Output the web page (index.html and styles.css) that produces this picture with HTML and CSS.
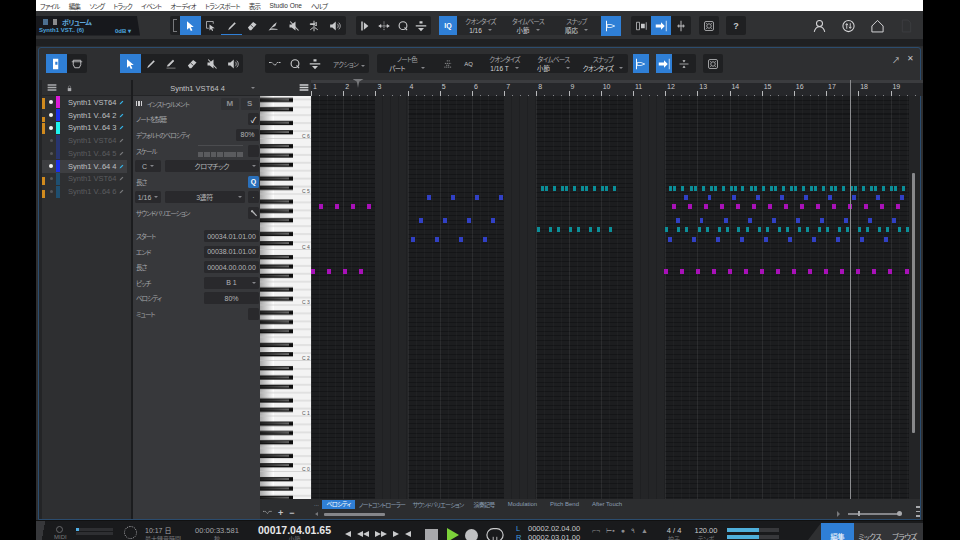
FILE: index.html
```html
<!DOCTYPE html>
<html lang="ja">
<head>
	<meta charset="UTF-8">
	<title>Studio One</title>
	<link rel="stylesheet" href="styles.css">
</head>
<body>
	<svg class="sprites" width="0" height="0">
		<symbol id="i-arrow" viewBox="0 0 16 16"><path d="M4 1.5V13l3-2.800 2.200 4.300 2-1-2.100-4.200H13z" fill="currentColor"/></symbol>
		<symbol id="i-select" viewBox="0 0 16 16"><path d="M2 2h9v3M2 2v9h3" fill="none" stroke="currentColor"/><path d="M6 6v8l2-2 1.500 2.800 1.300-.7L9.500 11H13z" fill="currentColor"/></symbol>
		<symbol id="i-pen" viewBox="0 0 16 16"><path d="M3 13.500l1-3L11.500 3l1.500 1.500L5.500 12z" fill="currentColor"/></symbol>
		<symbol id="i-line" viewBox="0 0 16 16"><path d="M3 11l1-2 6.500-6.500 1.500 1.500L5.500 10.500zM2 13.500h12" fill="currentColor" stroke="currentColor" stroke-width=".7"/></symbol>
		<symbol id="i-eraser" viewBox="0 0 16 16"><path d="M2.500 10l7-7.500 4.500 3.500-7 7.500H5z" fill="currentColor"/><path d="M6 6.500l4 3.500" stroke="#1f2022"/></symbol>
		<symbol id="i-knife" viewBox="0 0 16 16"><path d="M2 14l7-8 4-3-2 5-6 3 9 1v1H6z" fill="currentColor"/></symbol>
		<symbol id="i-mute" viewBox="0 0 16 16"><path d="M2 6h3l5-4v12l-5-4H2z" fill="currentColor"/><path d="M3 2l11 12" stroke="currentColor" stroke-width="1.400"/></symbol>
		<symbol id="i-bend" viewBox="0 0 16 16"><path d="M8 1v14M3 5h6l2-2v5l-2-2H3zM7 10l-4 3M9 10l4 3" fill="none" stroke="currentColor" stroke-width="1.300"/></symbol>
		<symbol id="i-speaker" viewBox="0 0 16 16"><path d="M1.500 6h3l4.500-4v12l-4.500-4h-3z" fill="currentColor"/><path d="M11 5a4 4 0 0 1 0 6M13 3.500a6 6 0 0 1 0 9" fill="none" stroke="currentColor"/></symbol>
		<symbol id="i-strip" viewBox="0 0 16 16"><path d="M3 2h2v12H3zM6.500 3l6 5-6 5z" fill="currentColor"/></symbol>
		<symbol id="i-stretch" viewBox="0 0 16 16"><path d="M8 2v12" stroke="currentColor" stroke-dasharray="1.500 1"/><path d="M1 8h14M1 8l3-2v4zM15 8l-3-2v4z" fill="currentColor" stroke="currentColor" stroke-width=".8"/></symbol>
		<symbol id="i-q" viewBox="0 0 16 16"><circle cx="8" cy="7.500" r="5.200" fill="none" stroke="currentColor" stroke-width="1.500"/><path d="M10 10l3.500 3.500" stroke="currentColor" stroke-width="1.500"/></symbol>
		<symbol id="i-bar" viewBox="0 0 16 16"><path d="M6 1.500h4v3H6zM1 7h14v1.500H1zM4 10.500h8L8 15z" fill="currentColor"/></symbol>
		<symbol id="i-snap" viewBox="0 0 16 16"><path d="M2 1v14" stroke="currentColor" stroke-width="1.300"/><path d="M3 6h5l5 2-5 2H3z" fill="none" stroke="currentColor"/></symbol>
		<symbol id="i-goto" viewBox="0 0 16 16"><path d="M1 6h7V3l5 5-5 5v-3H1z" fill="currentColor"/><path d="M15 1v14" stroke="currentColor"/></symbol>
		<symbol id="i-box" viewBox="0 0 16 16"><path d="M2 3h4v10H2zM15 3v10" fill="none" stroke="currentColor"/><path d="M8 5h5v6H8z" fill="currentColor"/></symbol>
		<symbol id="i-cross" viewBox="0 0 16 16"><path d="M8 1v14M3 8h10M5 6v4M11 6v4" fill="none" stroke="currentColor" stroke-width="1.200"/></symbol>
		<symbol id="i-split" viewBox="0 0 16 16"><path d="M2 8h12" stroke="currentColor"/><path d="M6 3h4L8 6zM6 13h4l-2-3z" fill="currentColor"/></symbol>
		<symbol id="i-dots" viewBox="0 0 16 16"><rect x="2" y="2" width="12" height="12" rx="2" fill="none" stroke="currentColor"/><circle cx="8" cy="8" r="3" fill="none" stroke="currentColor"/><path d="M4 4h1v1H4zM11 4h1v1h-1zM4 11h1v1H4zM11 11h1v1h-1z" fill="currentColor"/></symbol>
		<symbol id="i-wave" viewBox="0 0 16 16"><path d="M0 6h4l4 4 3-4h5" fill="none" stroke="currentColor" stroke-width="1.300" stroke-dasharray="2.500 .8"/></symbol>
		<symbol id="i-note" viewBox="0 0 16 16"><path d="M3 3h10v6l-2 4H5L3 9z" fill="none" stroke="currentColor" stroke-width="1.200"/><path d="M1 5h14" stroke="currentColor"/></symbol>
		<symbol id="i-piano" viewBox="0 0 16 16"><path d="M4 1h7v14H4z" fill="currentColor"/><path d="M7 5h3v4H7z" fill="#2f7fd6"/></symbol>
		<symbol id="i-lines" viewBox="0 0 16 16"><path d="M1 2h14v2.500H1zM1 6h14v2.500H1zM1 10h14v2.500H1z" fill="currentColor"/></symbol>
		<symbol id="i-steps" viewBox="0 0 16 16"><path d="M6 3h6M3 7h10M5 10h6M2 13h12" stroke="currentColor" stroke-dasharray="2 1"/></symbol>
		<symbol id="i-lock" viewBox="0 0 16 16"><path d="M4 7h8v7H4z" fill="currentColor"/><path d="M5.500 7V4.500a2.500 2.500 0 0 1 5 0V7" fill="none" stroke="currentColor"/></symbol>
		<symbol id="i-edit" viewBox="0 0 16 16"><path d="M2 14l1-4 8-8 3 3-8 8z" fill="currentColor"/></symbol>
		<symbol id="i-wrench" viewBox="0 0 16 16"><path d="M2 3l3-1 2 3 7 8-1.500 1.500L5 7 2 6z" fill="currentColor"/></symbol>
	</svg>

	<div class="app">
		<div class="menu">
			<span>ファイル</span><span>編集</span><span>ソング</span><span>トラック</span><span>イベント</span><span>オーディオ</span><span>トランスポート</span><span>表示</span><span class="en">Studio One</span><span>ヘルプ</span>
		</div>

		<div class="main-bar">
			<div class="vol-panel">
				<div class="vol-title"><span class="vol-ico"></span><span>ボリューム</span></div>
				<div class="vol-sub"><span>Synth1 VST.. (6)</span><span>0dB ▾</span></div>
			</div>
			<div class="group g-tools">
				<span class="bracket"></span>
				<span class="btn on"><svg><use href="#i-arrow"/></svg></span>
				<span class="btn"><svg><use href="#i-select"/></svg></span>
				<span class="btn current"><svg><use href="#i-pen"/></svg></span>
				<span class="btn"><svg><use href="#i-eraser"/></svg></span>
				<span class="btn"><svg><use href="#i-knife"/></svg></span>
				<span class="btn"><svg><use href="#i-mute"/></svg></span>
				<span class="btn"><svg><use href="#i-bend"/></svg></span>
				<span class="btn"><svg><use href="#i-speaker"/></svg></span>
			</div>
			<div class="group g-edit">
				<span class="btn"><svg><use href="#i-strip"/></svg></span>
				<span class="btn"><svg><use href="#i-stretch"/></svg></span>
				<span class="btn"><svg><use href="#i-q"/></svg></span>
				<span class="btn"><svg><use href="#i-bar"/></svg></span>
			</div>
			<span class="btn on iq">IQ</span>
			<div class="sel-band">
				<div class="sel w-47"><span>クオンタイズ</span><b>1/16<i class="caret"></i></b></div>
				<div class="sel w-48"><span>タイムベース</span><b>小節<i class="caret"></i></b></div>
				<div class="sel w-49"><span>スナップ</span><b>順応<i class="caret"></i></b></div>
			</div>
			<span class="btn on"><svg><use href="#i-snap"/></svg></span>
			<div class="group g-after-snap">
				<span class="btn"><svg><use href="#i-box"/></svg></span>
				<span class="btn on"><svg><use href="#i-goto"/></svg></span>
				<span class="btn"><svg><use href="#i-cross"/></svg></span>
			</div>
			<span class="btn solo g-dots"><svg><use href="#i-dots"/></svg></span>
			<span class="btn solo g-help">?</span>
			<div class="user-icons">
				<svg viewBox="0 0 20 20"><circle cx="10" cy="6.500" r="4.300" fill="none" stroke="currentColor" stroke-width="1.500"/><path d="M2.500 18.500c1-5 3.500-7.500 7.500-7.500s6.500 2.500 7.500 7.500" fill="none" stroke="currentColor" stroke-width="1.500"/></svg>
				<svg viewBox="0 0 20 20"><circle cx="10" cy="10" r="8" fill="none" stroke="currentColor" stroke-width="1.500"/><path d="M7.500 14V7M5.800 8.800l1.700-2.300 1.700 2.300M12.500 6v7M10.800 11.200l1.700 2.300 1.700-2.300" fill="none" stroke="currentColor" stroke-width="1.300"/></svg>
				<svg viewBox="0 0 20 20"><path d="M2 18.500V10l8-8 8 8v8.500z" fill="none" stroke="currentColor" stroke-width="1.400" stroke-linejoin="round"/></svg>
				<svg class="dim" viewBox="0 0 20 20"><path d="M4 1.500h8l4 4v13H4z" fill="none" stroke="currentColor" stroke-width="1.300"/></svg>
			</div>
		</div>

		<div class="under-bar"></div>

		<div class="editor">
			<div class="ed-bar">
				<div class="group g-view">
					<span class="btn on"><svg><use href="#i-piano"/></svg></span>
					<span class="btn"><svg><use href="#i-note"/></svg></span>
				</div>
				<div class="group g-ed-tools">
					<span class="btn on"><svg><use href="#i-arrow"/></svg></span>
					<span class="btn"><svg><use href="#i-pen"/></svg></span>
					<span class="btn"><svg><use href="#i-line"/></svg></span>
					<span class="btn"><svg><use href="#i-eraser"/></svg></span>
					<span class="btn"><svg><use href="#i-mute"/></svg></span>
					<span class="btn"><svg><use href="#i-speaker"/></svg></span>
				</div>
				<div class="group g-action">
					<span class="btn"><svg><use href="#i-wave"/></svg></span>
					<span class="btn"><svg><use href="#i-q"/></svg></span>
					<span class="btn"><svg><use href="#i-bar"/></svg></span>
					<span class="action">アクション<i class="caret"></i></span>
				</div>
				<div class="group g-note">
					<div class="sel w-60"><span>ノート色</span><b class="tight">パート<i class="caret wide"></i></b></div>
					<span class="btn thin"><svg><use href="#i-steps"/></svg></span>
					<span class="btn thin aq">AQ</span>
					<div class="sel w-51"><span>クオンタイズ</span><b>1/16 T<i class="caret"></i></b></div>
					<div class="sel w-47"><span>タイムベース</span><b>小節<i class="caret wide"></i></b></div>
					<div class="sel w-52"><span>スナップ</span><b class="tight">クオンタイズ<i class="caret"></i></b></div>
				</div>
				<span class="btn on nar"><svg><use href="#i-snap"/></svg></span>
				<div class="group g-ed-goto">
					<span class="btn on nar"><svg><use href="#i-goto"/></svg></span>
					<span class="btn wide"><svg><use href="#i-split"/></svg></span>
				</div>
				<span class="btn solo g-ed-dots"><svg><use href="#i-dots"/></svg></span>
				<div class="win-btns"><span>↗</span><span>✕</span></div>
			</div>

			<div class="ed-body">
				<div class="tracks">
					<div class="tracks-head">
						<svg><use href="#i-lines"/></svg>
						<svg class="lock"><use href="#i-lock"/></svg>
					</div>
					<div class="track">
						<i class="flag full"></i><i class="dot"></i><i class="color c-mag"></i><span>Synth1 VST64</span><svg class="pen"><use href="#i-edit"/></svg>
					</div>
					<div class="track">
						<i class="flag low"></i><i class="dot"></i><i class="color c-blue"></i><span>Synth1 V..64 2</span><svg class="pen"><use href="#i-edit"/></svg>
					</div>
					<div class="track">
						<i class="flag full"></i><i class="dot"></i><i class="color c-cyan"></i><span>Synth1 V..64 3</span><svg class="pen"><use href="#i-edit"/></svg>
					</div>
					<div class="track off">
						<i class="flag none"></i><i class="dot"></i><i class="color c-dimblue"></i><span>Synth1 VST64</span><svg class="pen"><use href="#i-edit"/></svg>
					</div>
					<div class="track off">
						<i class="flag none"></i><i class="dot"></i><i class="color c-dimblue"></i><span>Synth1 V..64 5</span><svg class="pen"><use href="#i-edit"/></svg>
					</div>
					<div class="track selected">
						<i class="flag none"></i><i class="dot"></i><i class="color c-blue"></i><span>Synth1 V..64 4</span><svg class="pen"><use href="#i-edit"/></svg>
					</div>
					<div class="track off">
						<i class="flag mid"></i><i class="dot"></i><i class="color c-dimteal"></i><span>Synth1 VST64</span><svg class="pen"><use href="#i-edit"/></svg>
					</div>
					<div class="track off">
						<i class="flag mid"></i><i class="dot"></i><i class="color c-dimteal"></i><span>Synth1 V..64 6</span><svg class="pen"><use href="#i-edit"/></svg>
					</div>
				</div>

				<div class="inspector">
					<div class="insp-head"><span>Synth1 VST64 4</span><i class="caret"></i></div>
					<div class="row"><label><span class="kbd-ico"></span>インストゥルメント</label><span class="field ms">M</span><span class="field ms">S</span></div>
					<div class="row"><label>ノートを試聴</label><span class="field sq check">✓</span></div>
					<div class="row"><label>デフォルトのベロシティ</label><span class="field pct">80%</span></div>
					<div class="row"><label>スケール</label><span class="mini-keys"></span><span class="field sq"></span></div>
					<div class="row"><span class="field short">C<i class="caret"></i></span><span class="field grow">クロマチック<i class="caret end"></i></span></div>
					<div class="row"><label>長さ</label><span class="field sq blue">Q</span></div>
					<div class="row"><span class="field short">1/16<i class="caret"></i></span><span class="field grow">3連符<i class="caret end"></i></span><span class="field sq">·</span></div>
					<div class="row"><label>サウンドバリエーション</label><span class="field sq"><svg><use href="#i-wrench"/></svg></span></div>
					<div class="row first-value"><label>スタート</label><span class="field val">00034.01.01.00</span></div>
					<div class="row"><label>エンド</label><span class="field val">00038.01.01.00</span></div>
					<div class="row"><label>長さ</label><span class="field val">00004.00.00.00</span></div>
					<div class="row"><label>ピッチ</label><span class="field val">B 1<i class="caret end"></i></span></div>
					<div class="row"><label>ベロシティ</label><span class="field val">80%</span></div>
					<div class="row"><label>ミュート</label><span class="field sq"></span></div>
				</div>

				<div class="roll">
					<div class="roll-head">
						<div class="corner"><svg><use href="#i-lines"/></svg></div>
						<div class="ruler">
							<span>1</span><span>2</span><span>3</span><span>4</span><span>5</span><span>6</span><span>7</span><span>8</span><span>9</span><span>10</span><span>11</span><span>12</span><span>13</span><span>14</span><span>15</span><span>16</span><span>17</span><span>18</span><span>19</span>
							<i class="locator"></i>
						</div>
					</div>
					<div class="roll-main">
						<svg class="piano" width="51" height="403">
							<defs>
								<linearGradient id="shade"><stop offset="0" stop-color="#a8a8a8"/><stop offset="1" stop-color="#fff"/></linearGradient>
								<linearGradient id="shine"><stop offset="0" stop-color="#1c1c1c"/><stop offset="1" stop-color="#707070"/></linearGradient>
								<g id="black-key"><rect width="33" height="4.200" fill="#0d0d0d"/><rect y="1" width="29" height="1.800" fill="url(#shine)"/></g>
								<pattern id="octave" width="51" height="55.500" y="-12.500" patternUnits="userSpaceOnUse">
									<rect width="51" height="55.500" fill="#f3f3f3"/>
									<rect width="14" height="55.500" fill="url(#shade)"/>
									<path d="M0 7.900h51M0 15.900h51M0 23.800h51M0 31.700h51M0 39.600h51M0 47.600h51M0 55.200h51" stroke="#c4c4c4" stroke-width=".8"/>
									<use href="#black-key" y="5.100"/>
									<use href="#black-key" y="14.400"/>
									<use href="#black-key" y="23.700"/>
									<use href="#black-key" y="37.400"/>
									<use href="#black-key" y="46.700"/>
								</pattern>
							</defs>
							<rect width="51" height="403" fill="url(#octave)"/>
							<text x="42" y="42">C 6</text>
							<text x="42" y="97">C 5</text>
							<text x="42" y="153">C 4</text>
							<text x="42" y="208">C 3</text>
							<text x="42" y="264">C 2</text>
							<text x="42" y="319">C 1</text>
							<text x="42" y="375">C 0</text>
						</svg>
						<div class="grid" id="grid">
							<i class="empty bar-3"></i>
							<i class="empty bar-7"></i>
							<i class="empty bar-11"></i>
						</div>
						<div class="vscroll"><i></i></div>
					</div>
					<div class="roll-foot">
						<div class="foot-tools"><svg><use href="#i-wave"/></svg><span>+</span><span>−</span></div>
						<div class="foot-main">
							<div class="tabs">
								<span>...</span><span class="active">ベロシティ</span><span class="jp">ノートコントローラー</span><span class="jp">サウンドバリエーション</span><span class="jp">演奏記号</span><span>Modulation</span><span>Pitch Bend</span><span>After Touch</span>
							</div>
							<div class="hscroll">
								<i class="tri-left"></i><i class="thumb"></i><i class="tri-right"></i>
								<div class="zoom"><i class="knob"></i><i class="end"></i></div>
							</div>
						</div>
						<div class="foot-side"><i></i><i></i><i></i></div>
					</div>
					<i class="playhead"></i>
				</div>
			</div>
		</div>

		<div class="transport">
			<div class="tp midi"><span class="ring"></span><small>MIDI</small></div>
			<div class="tp meter"><i></i><i></i></div>
			<div class="tp spin"></div>
			<div class="tp clock"><span>10:17 日</span><small>最大録音時間</small></div>
			<div class="tp elapsed"><span>00:00:33.581</span><small>秒</small></div>
			<div class="tp pos"><b>00017.04.01.65</b><small>小節</small></div>
			<div class="tp keys">
				<i class="tl apart"></i><i class="tl"></i><i class="tl apart"></i><i class="tr"></i><i class="tr apart"></i><i class="tr apart"></i><i class="bar"></i><i class="tl"></i>
			</div>
			<div class="tp stop"></div>
			<div class="tp play"></div>
			<div class="tp rec"></div>
			<div class="tp loop"><svg viewBox="0 0 20 20"><rect x="1" y="3" width="18" height="14" rx="7" fill="none" stroke="currentColor" stroke-width="1.300"/><path d="M8 12v8M12 12v8" stroke="currentColor"/></svg></div>
			<div class="tp lr"><span><em>L</em>00002.02.04.00</span><span><em>R</em>00002.03.01.00</span></div>
			<div class="tp flags"><span>⌐¬</span><span>⊢▪</span><span>●</span><span>٩</span><span>▲</span></div>
			<div class="tp sig"><span>4 / 4</span><small>拍子</small></div>
			<div class="tp tempo"><span>120.00</span><small>テンポ</small></div>
			<div class="tp levels"><i></i><i></i></div>
			<div class="tabs-main"><span class="active">編集</span><span>ミックス</span><span>ブラウズ</span></div>
		</div>
	</div>
	<script src="notes.js"></script>
</body>
</html>
```

FILE: styles.css
```css
*{
	margin: 0;
	padding: 0;
	box-sizing: border-box;
}
html,body{
	height: 100%;
	overflow: hidden;
	background: #000;
}
body{
	font-family: "Liberation Sans", "Noto Sans CJK JP", sans-serif;
	font-size: 7px;
	color: #a4a5a8;
	font-feature-settings: "palt";
}
i{
	display: block;
	font-style: normal;
}
.sprites{
	position: absolute;
}
.app{
	width: 887px;
	height: 540px;
	margin-left: 36px;
	display: flex;
	flex-direction: column;
	background: #2e2f31;
	overflow: hidden;
}

/* menu */
.menu{
	height: 11px;
	flex: none;
	display: flex;
	align-items: center;
	gap: 9px;
	padding-left: 4px;
	background: #fff;
	color: #333;
	font-size: 6.5px;
	letter-spacing: -.7px;
}
.menu .en{
	letter-spacing: 0;
}

/* shared toolbar pieces */
.btn{
	width: 20px;
	height: 20px;
	flex: none;
	display: flex;
	align-items: center;
	justify-content: center;
	color: #c9cacc;
	font-weight: bold;
}
.btn svg{
	width: 12px;
	height: 12px;
}
.btn.on{
	background: #2f7fd6;
	color: #fff;
}
.btn.nar{
	width: 16px;
	height: 19px;
}
.btn.wide{
	width: 24px;
	height: 19px;
}
.btn.thin{
	width: 21px;
}
.btn.thin svg{
	width: 10px;
	height: 10px;
}
.aq{
	font-size: 6px;
	font-weight: normal;
}
.iq{
	width: 18px;
	font-size: 7px;
}
.group, .btn.solo{
	display: flex;
	align-items: center;
	background: #1f2022;
	border-radius: 2px;
}
.sel{
	flex: none;
	display: flex;
	flex-direction: column;
	align-items: center;
	font-size: 6.5px;
	line-height: 9px;
}
.sel span{
	letter-spacing: -.7px;
}
.sel b{
	display: flex;
	align-items: center;
	font-weight: normal;
	color: #d2d3d5;
}
.sel b.tight{
	letter-spacing: -.7px;
}
.caret{
	display: inline-block;
	width: 0;
	height: 0;
	margin-left: 6px;
	border-left: 2px solid transparent;
	border-right: 2px solid transparent;
	border-top: 2px solid #85868a;
}
.caret.wide{
	margin-left: 16px;
}
.w-47{ width: 47px; }
.w-48{ width: 48px; }
.w-49{ width: 49px; }
.w-51{ width: 51px; }
.w-52{ width: 52px; }
.w-60{ width: 60px; }

/* main toolbar */
.main-bar{
	height: 28px;
	flex: none;
	display: flex;
	align-items: center;
	background: #303133;
	padding-top: 1px;
}
.vol-panel{
	width: 104px;
	height: 20px;
	flex: none;
	padding: 2px 0 0 3px;
	background: #17181c;
	clip-path: polygon(0 0, 97% 0, 100% 100%, 0 100%);
}
.vol-title{
	display: flex;
	align-items: center;
	gap: 5px;
	height: 8px;
	color: #5fa8dd;
	font-weight: bold;
	padding-left: 4px;
	letter-spacing: -.5px;
}
.vol-ico{
	width: 14px;
	height: 6px;
	border-left: 5px solid #4c6f8f;
	border-right: 4px solid #8a8b8d;
}
.vol-sub{
	display: flex;
	justify-content: space-between;
	padding-right: 9px;
	margin-top: 1px;
	font-size: 6px;
	font-weight: bold;
	color: #4ea4dc;
}
.g-tools{
	margin-left: 30px;
	width: 176px;
	height: 19px;
}
.bracket{
	width: 4px;
	height: 13px;
	margin-left: 3px;
	margin-right: 3px;
	flex: none;
	border: 1px solid #77787b;
	border-right: 0;
}
.g-tools .btn{
	width: 20.7px;
	height: 19px;
}
.current{
	box-shadow: inset 0 -1px 0 #2f7fd6;
}
.g-edit{
	margin-left: 10px;
	width: 75px;
	height: 19px;
}
.g-edit .btn{
	width: 18.7px;
	height: 19px;
}
.iq{
	margin-left: 8px;
	height: 19px;
}
.sel-band{
	display: flex;
	align-items: center;
	height: 19px;
	background: #27282a;
}
.g-after-snap{
	margin-left: 10px;
}
.g-after-snap .btn{
	height: 19px;
}
.g-dots{
	margin-left: 8px;
	height: 19px;
}
.g-help{
	margin-left: 7px;
	height: 19px;
	font-size: 9px;
}
.user-icons{
	margin-left: auto;
	display: flex;
	color: #d6d6d8;
	padding-right: 2px;
}
.user-icons svg{
	width: 29px;
	height: 14px;
}
.user-icons .dim{
	color: #3d3e41;
}
.under-bar{
	height: 8px;
	flex: none;
	background: #1f2022;
	border-bottom: 1px solid #2a2b2d;
}

/* editor window */
.editor{
	flex: 1;
	min-height: 0;
	margin: 0 2px;
	display: flex;
	flex-direction: column;
	border: 1px solid #2b4c6e;
	border-radius: 3px 3px 0 0;
	background: #2e2f31;
}
.ed-bar{
	height: 32px;
	flex: none;
	display: flex;
	align-items: center;
	padding-left: 7px;
	padding-bottom: 1px;
}
.ed-bar .group{
	height: 19px;
}
.g-view{
	width: 41px;
}
.g-view .btn{
	width: 20.5px;
	height: 19px;
}
.g-ed-tools{
	margin-left: 33px;
	width: 123px;
}
.g-ed-tools .btn{
	width: 20.5px;
	height: 19px;
}
.g-action{
	margin-left: 22px;
	width: 104px;
}
.action{
	margin-left: 8px;
	white-space: nowrap;
	font-size: 6.5px;
	letter-spacing: -.6px;
}
.action .caret{
	margin-left: 3px;
}
.g-action .btn{
	height: 19px;
}
.g-note{
	margin-left: 8px;
	width: 251px;
}
.g-note .btn{
	height: 19px;
}
.ed-bar > .btn.on{
	margin-left: 5px;
}
.g-ed-goto{
	margin-left: 7px;
	width: 40px;
}
.g-ed-dots{
	margin-left: 7px;
	height: 19px;
}
.win-btns{
	margin-left: auto;
	display: flex;
	gap: 7px;
	align-self: flex-start;
	padding: 6px 6px 0 0;
	font-size: 8px;
	color: #c4c5c7;
}

.ed-body{
	flex: 1;
	min-height: 0;
	display: flex;
}

/* track list */
.tracks{
	width: 93px;
	flex: none;
	padding-left: 3px;
	background: #2e2f31;
	border-right: 1px solid #1b1c1e;
	box-shadow: inset 3px 0 0 #232426;
}
.tracks-head{
	height: 16px;
	display: flex;
	align-items: center;
	padding-left: 5px;
	gap: 9px;
	background: #2e2f31;
	color: #a9aaad;
	box-shadow: inset 0 -1px 0 #232426;
}
.tracks-head svg{
	width: 10px;
	height: 10px;
}
.tracks-head .lock{
	width: 7px;
	height: 7px;
}
.track{
	height: 12.75px;
	display: flex;
	align-items: center;
	width: 85px;
	color: #bfc0c2;
	font-size: 7.5px;
}
.track span{
	width: 51px;
	flex: none;
	white-space: nowrap;
}
.track .pen{
	width: 5px;
	height: 5px;
	flex: none;
	margin-left: 0;
	color: #35b4e8;
}
.track.off{
	color: #5c5d60;
}
.track.off .pen{
	color: #77787a;
}
.track.off .dot{
	background: #55565a;
	width: 3px;
	height: 3px;
	margin: 0 3.5px 0 3.5px;
}
.track.selected{
	background: #3d3e41;
}
.flag{
	width: 3px;
	flex: none;
	background: #d08a1e;
	margin-right: 1px;
	align-self: flex-end;
}
.flag.full{ height: 11px; }
.flag.mid{ height: 8px; }
.flag.low{ height: 5px; }
.flag.none{ background: transparent; }
.dot{
	width: 4px;
	height: 4px;
	flex: none;
	margin: 0 3px;
	border-radius: 50%;
	background: #f2f2f2;
}
.color{
	width: 4px;
	height: 12px;
	flex: none;
	margin-right: 8px;
}
.c-mag{ background: #dc1ad8; }
.c-blue{ background: #1b30ea; }
.c-cyan{ background: #1ff2ee; }
.c-dimblue{ background: #28356f; }
.c-dimteal{ background: #1f4f70; }

/* inspector */
.inspector{
	width: 128px;
	flex: none;
	background: #37383b;
	border-left: 1px solid #1b1c1e;
	padding-right: 1px;
}
.insp-head{
	height: 16px;
	margin-right: -1px;
	display: flex;
	align-items: center;
	justify-content: center;
	font-size: 7.5px;
	color: #c4c5c7;
	background: #2e2f31;
	padding-left: 2px;
	position: relative;
	box-shadow: inset 0 -1px 0 #232426;
}
.insp-head .caret{
	position: absolute;
	right: 5px;
	top: 7px;
}
.row{
	height: 15.6px;
	display: flex;
	align-items: center;
	justify-content: flex-end;
	gap: 1.5px;
	padding-left: 2px;
}
.row label{
	margin-right: auto;
	padding-left: 1px;
	display: flex;
	align-items: center;
	gap: 4px;
	white-space: nowrap;
	font-size: 6.5px;
	letter-spacing: -.9px;
}
.first-value{
	margin-top: 7.5px;
}
.kbd-ico{
	width: 7px;
	height: 5px;
	background: repeating-linear-gradient(90deg, #d0d0d2 0 1px, #37383b 1px 1.7px);
}
.field{
	height: 12px;
	display: flex;
	align-items: center;
	justify-content: center;
	background: #29292c;
	border-radius: 1.5px;
	color: #b5b6b8;
	position: relative;
}
.field.ms{
	width: 18.5px;
	background: #303134;
	font-size: 8px;
	font-weight: bold;
	color: #8e8f92;
}
.field.sq{
	width: 11px;
	margin-left: 2px;
}
.field.sq svg{
	width: 8px;
	height: 8px;
}
.field.check{
	color: #fff;
	font-size: 8px;
}
.field.blue{
	background: #2a70bb;
	color: #fff;
	font-weight: bold;
}
.field.pct{
	width: 23px;
}
.field.short{
	width: 26px;
	margin-right: 2px;
}
.field.short .caret{
	margin-left: 3px;
}
.field.grow{
	flex: 1;
	letter-spacing: -.5px;
}
.caret.end{
	position: absolute;
	right: 3px;
	top: 5px;
}
.field.val{
	width: 55px;
	font-size: 7px;
}
.mini-keys{
	width: 45px;
	height: 12px;
	margin-right: 2px;
	background:
		linear-gradient(#37383b 0 6px, transparent 6px),
		repeating-linear-gradient(90deg, #5a5b5e 0 5.5px, #37383b 5.5px 6.5px);
	border-top: 1px solid #4b4c4f;
}

/* piano roll */
.roll{
	flex: 1;
	min-width: 0;
	display: flex;
	flex-direction: column;
	position: relative;
}
.roll-head{
	height: 16px;
	flex: none;
	display: flex;
}
.corner{
	width: 51px;
	flex: none;
	display: flex;
	justify-content: flex-end;
	align-items: center;
	padding-right: 2px;
	background: #2e2f31;
	color: #d0d1d3;
}
.corner svg{
	width: 10px;
	height: 10px;
}
.ruler{
	flex: 1;
	display: flex;
	position: relative;
	color: #c8c9cb;
	font-size: 7px;
	line-height: 13px;
	background:
		repeating-linear-gradient(90deg, #b8b9bb 0 1px, transparent 1px 32.2px) 0 100% / 100% 5px no-repeat,
		repeating-linear-gradient(90deg, #85868a 0 1px, transparent 1px 8.05px) 0 100% / 100% 1.5px no-repeat,
		linear-gradient(#3b3c3f 0 3px, #26272a 3px);
}
.ruler span{
	flex: none;
	width: 32.2px;
	padding-left: 2px;
}
.locator{
	position: absolute;
	left: 41.5px;
	top: -1px;
	width: 11px;
	height: 9px;
	background: #77787b;
	clip-path: polygon(0 0, 100% 0, 60% 30%, 50% 100%, 40% 30%);
}
.roll-main{
	flex: 1;
	min-height: 0;
	display: flex;
}
.piano{
	flex: none;
	display: block;
}
.piano text{
	font-size: 5px;
	fill: #555;
}
.grid{
	width: 598px;
	flex: none;
	position: relative;
	overflow: hidden;
	background-color: #17181a;
	background-image:
		repeating-linear-gradient(90deg, rgba(255,255,255,.05) 0 1px, transparent 1px 32.2px),
		repeating-linear-gradient(90deg, rgba(255,255,255,.025) 0 1px, transparent 1px 8.05px),
		repeating-linear-gradient(180deg, #1c1d1f 0 3.6px, #141517 3.6px 4.625px);
}
.empty{
	position: absolute;
	top: 0;
	bottom: 0;
	width: 32.2px;
	background: repeating-linear-gradient(90deg, #242527 0 7px, #1f2022 7px 8.05px);
}
.bar-3{ left: 64.4px; }
.bar-7{ left: 193.2px; }
.bar-11{ left: 322px; }
.note{
	position: absolute;
	width: 3.3px;
	height: 5px;
}
.note.wide{
	width: 3px;
}
.vscroll{
	flex: 1;
	background: #232426;
	padding-left: 3px;
	padding-top: 77px;
}
.vscroll i{
	width: 3px;
	height: 260px;
	background: #87888b;
	border-radius: 1px;
}
.roll-foot{
	height: 20px;
	flex: none;
	display: flex;
	background: #2c2d2f;
}
.foot-tools{
	width: 51px;
	flex: none;
	display: flex;
	align-items: center;
	gap: 6px;
	padding: 7px 0 0 3px;
	font-size: 9px;
	font-weight: bold;
	color: #c4c5c7;
}
.foot-tools svg{
	width: 9px;
	height: 9px;
}
.foot-main{
	width: 598px;
	flex: none;
}
.tabs{
	height: 10px;
	display: grid;
	grid-template-columns: 11px 33px 54px 58px 34px 43px 41px 44px;
	align-items: center;
	justify-items: center;
	font-size: 6px;
	color: #8b9fb2;
}
.tabs span{
	white-space: nowrap;
}
.tabs .jp{
	letter-spacing: -.7px;
}
.tabs .active{
	width: 100%;
	height: 9px;
	line-height: 9px;
	text-align: center;
	background: #2f7fd6;
	color: #fff;
	letter-spacing: -.6px;
}
.hscroll{
	height: 10px;
	display: flex;
	align-items: center;
	padding-left: 4px;
}
.tri-left{
	width: 0;
	height: 0;
	border: 2.5px solid transparent;
	border-right: 3px solid #77787b;
	border-left: 0;
}
.thumb{
	width: 61px;
	height: 3px;
	margin-left: 6px;
	border-radius: 1px;
	background: #85868a;
}
.tri-right{
	width: 0;
	height: 0;
	margin-left: 452px;
	border: 3px solid transparent;
	border-left: 3px solid #77787b;
	border-right: 0;
}
.zoom{
	width: 52px;
	height: 1.5px;
	margin-left: 8px;
	position: relative;
	background: #85868a;
}
.knob{
	position: absolute;
	left: 10px;
	top: -2px;
	width: 2px;
	height: 5px;
	background: #a9aaad;
}
.zoom .end{
	position: absolute;
	right: -2px;
	top: -2px;
	width: 5px;
	height: 5px;
	border-radius: 50%;
	background: #a9aaad;
}
.foot-side{
	flex: 1;
	display: flex;
	flex-direction: column;
	align-items: center;
	gap: 3px;
	padding: 7px 0 0 6px;
}
.foot-side i{
	width: 4px;
	height: 1.5px;
	background: #a9aaad;
}
.playhead{
	position: absolute;
	left: 590px;
	top: 0;
	bottom: 20px;
	width: 1px;
	background: #8b8c8f;
}

/* transport */
.transport{
	height: 20px;
	flex: none;
	display: flex;
	align-items: flex-start;
	padding: 5px 0 0 0;
	background: linear-gradient(100deg, #36373a 0 9px, #191a1c 9px);
	position: relative;
	overflow: hidden;
	border-top: 1px solid #111;
}
.tp{
	flex: none;
	display: flex;
	flex-direction: column;
	font-size: 7px;
	color: #a4a5a8;
	line-height: 9px;
	white-space: nowrap;
}
.tp small{
	font-size: 6px;
	color: #77787b;
}
.midi{
	width: 22px;
	margin-left: 18px;
}
.ring{
	width: 7px;
	height: 7px;
	border: 1px solid #66676a;
	border-radius: 50%;
	margin-left: 2px;
}
.meter{
	width: 37px;
	margin-top: 2px;
	gap: 1px;
}
.meter i{
	height: 3px;
	background: #2e2f32;
}
.meter i:first-child{
	background: linear-gradient(90deg, #4fb0e8 0 3px, #2e2f32 3px);
}
.spin{
	width: 13px;
	height: 13px;
	margin-left: 11px;
	border: 1.5px dotted #a9aaad;
	border-radius: 50%;
}
.clock{
	width: 40px;
	margin-left: 8px;
}
.elapsed{
	width: 64px;
	align-items: center;
	font-size: 7.5px;
}
.pos{
	width: 77px;
	margin-left: 7px;
	align-items: center;
}
.pos b{
	font-size: 10.5px;
	color: #e8e8e9;
	line-height: 9px;
}
.keys{
	flex-direction: row;
	margin-left: 12px;
	padding-top: 5px;
	width: 65px;
}
.keys i{
	width: 0;
	height: 0;
	border: 3.5px solid transparent;
}
.keys .tl{
	border-right: 6px solid #c9cacc;
	border-left: 0;
}
.keys .tr{
	border-left: 6px solid #c9cacc;
	border-right: 0;
}
.keys .apart{
	margin-right: 6px;
}
.keys .bar{
	width: 1px;
	height: 7px;
	border: 0;
	background: #c9cacc;
}
.stop{
	width: 13px;
	height: 15px;
	margin: 3px 0 0 15px;
	background: #a8a9ac;
}
.play{
	width: 0;
	height: 0;
	margin-left: 9px;
	margin-top: 2px;
	border-left: 12px solid #7cd23a;
	border-top: 7px solid transparent;
	border-bottom: 7px solid transparent;
}
.rec{
	width: 13px;
	height: 13px;
	margin-left: 6px;
	margin-top: 3px;
	border-radius: 50%;
	background: #c0c1c3;
}
.loop{
	width: 18px;
	margin-left: 8px;
	color: #c9cacc;
}
.loop svg{
	width: 18px;
	height: 18px;
}
.lr{
	width: 70px;
	margin-left: 12px;
	line-height: 8.5px;
	margin-top: -1px;
	font-size: 7.5px;
	color: #c9cacc;
}
.lr em{
	display: inline-block;
	width: 12px;
	color: #3f9be0;
	font-style: normal;
}
.flags{
	flex-direction: row;
	gap: 6px;
	width: 71px;
	margin-left: 6px;
	color: #8c8d90;
}
.sig{
	width: 22px;
	align-items: center;
	font-size: 7.5px;
	color: #c9cacc;
}
.tempo{
	width: 28px;
	margin-left: 7px;
	align-items: center;
	font-size: 7.5px;
	color: #c9cacc;
}
.levels{
	width: 52px;
	margin-left: 7px;
	margin-top: 2px;
	gap: 3px;
}
.levels i{
	height: 4px;
	background: linear-gradient(90deg, #4fb0dc 0 62%, #37383b 62%);
}
.tabs-main{
	position: absolute;
	right: 0;
	top: 2px;
	bottom: 0;
	display: flex;
	font-size: 7.5px;
	line-height: 29px;
	color: #c4c5c7;
}
.tabs-main::before{
	content: "";
	width: 13px;
	background: #2e2f31;
	clip-path: polygon(100% 0, 100% 100%, 0 100%);
}
.tabs-main span{
	width: 32.5px;
	text-align: center;
	background: #333437;
	letter-spacing: -.6px;
}
.tabs-main span:last-child{
	width: 37px;
}
.tabs-main .active{
	background: #2f7fd6;
	color: #fff;
}
```

FILE: notes.js
```js
// x = centre of each note on the page, y = centre of its row
const pageLeft = 311;
const pageTop = 96;
const colors = { mag: '#a811b8', blue: '#3140c4', teal: '#0b8e98' };

const rows = [
	{ c: 'mag', y: 206.5, x: [321,337,353,369,674,690,706,722,738,754,770,786,802,818,834,850,866,882,898] },
	{ c: 'mag', y: 271, x: [313,329,345,361,666,682,698,714,730,746,762,778,794,810,826,842,858,874,890,907] },
	{ c: 'blue', y: 197, x: [429,453,477,501,686,709.5,734,758,782,806,830,854,878,902] },
	{ c: 'blue', y: 220, x: [421,445,469,493,678,701.5,726,750,774,798,822,846,870,894] },
	{ c: 'blue', y: 239, x: [413,437,461,485,670,694,718,742,766,790,814,838,862,886] },
	{ c: 'teal', y: 188, x: [543,547,555,563,567,575,583,587,595,603,607,615,671,675,683,692,696,704,712,716,724,732,736,743,752,756,764,772,776,784,792,796,804,812,816,824,832,836,844,852,856,864,872,876,884,892,896,904] },
	{ c: 'teal', y: 229.5, x: [539,551,559,571,579,591,599,611,667,679,687,700,708,720,728,739,748,760,768,780,788,800,808,820,828,840,848,860,868,880,888,900,908] }
];

const grid = document.getElementById('grid');
rows.forEach(row => {
	row.x.forEach(x => {
		const note = document.createElement('i');
		note.className = row.c === 'teal' ? 'note wide' : 'note';
		note.style.left = (x - 1.6 - pageLeft) + 'px';
		note.style.top = (row.y - 2.5 - pageTop) + 'px';
		note.style.background = colors[row.c];
		grid.appendChild(note);
	});
});
```
